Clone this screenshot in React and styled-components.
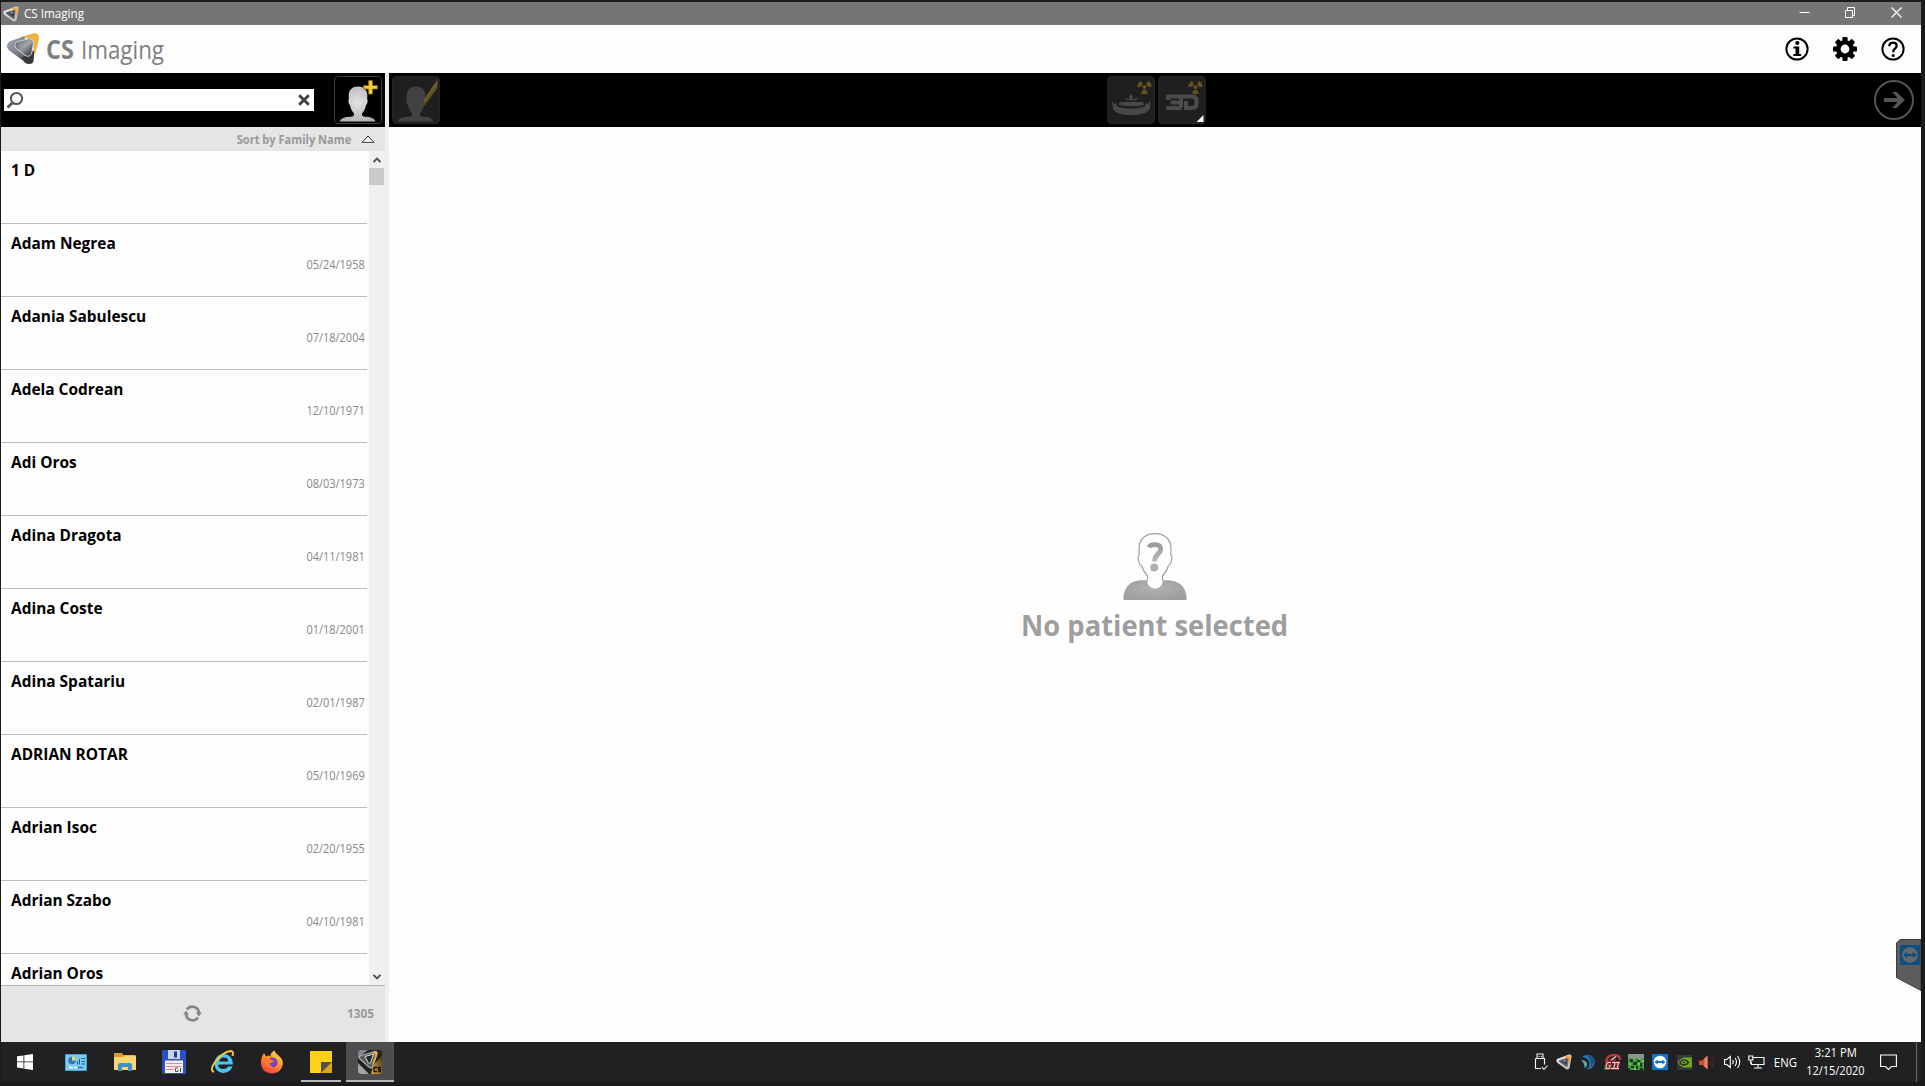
import React from "react";
import styled, { createGlobalStyle } from "styled-components";

const GlobalStyle = createGlobalStyle`
  * { box-sizing: border-box; }
  body { margin: 0; background: #1c1a1b; overflow: hidden; }
  svg { display: block; flex: none; }
`;

const Screen = styled.div`
  position: relative;
  display: flex;
  flex-direction: column;
  width: 1925px;
  height: 1086px;
  padding: 2px 4px 4px 1px;
  background: #1c1a1b;
  font-family: "Open Sans", "Noto Sans", sans-serif;
  overflow: hidden;
`;

const Fit = styled.span`
  display: inline-block;
  white-space: nowrap;
  transform: scaleX(${(p) => p.$x || 1});
  transform-origin: ${(p) => p.$origin || "left"} center;
`;

const TitleBar = styled.header`
  display: flex;
  align-items: center;
  height: 23px;
  padding-left: 2px;
  background: #757575;
  color: #fff;
  font-size: 12px;
`;
const TitleText = styled.div`
  flex: 1;
  margin-left: 5px;
  height: 23px;
  line-height: 23px;
`;
const WindowButtons = styled.div`
  display: flex;
  gap: 29px;
  padding: 0 16px 2px 0;
`;

const Brand = styled.div`
  display: flex;
  align-items: center;
  height: 48px;
  padding: 0 16px 0 5px;
  background: #fefdfe;
`;
const BrandName = styled.div`
  flex: 1;
  display: flex;
  gap: 7px;
  margin-left: 6px;
  color: #7c8081;
  font-size: 26px;
  line-height: 46px;
  b { font-weight: 700; width: 28px; }
`;
const BrandActions = styled.div`
  display: flex;
  gap: 24px;
  padding-bottom: 0;
`;

const Body = styled.div`
  display: flex;
  height: 969px;
`;
const Sidebar = styled.aside`
  display: flex;
  flex-direction: column;
  width: 384px;
`;
const Gutter = styled.div`
  width: 4px;
  background: #efeef0;
`;
const SearchBar = styled.div`
  display: flex;
  align-items: center;
  justify-content: space-between;
  height: 54px;
  padding: 0 3px;
  background: #000;
`;
const SearchField = styled.div`
  display: flex;
  align-items: center;
  justify-content: space-between;
  width: 310px;
  height: 22px;
  padding: 0 4px 0 2px;
  background: #fff;
`;
const ToolButton = styled.div`
  width: 48px;
  height: 48px;
  border: 1px solid ${(p) => (p.$dim ? "#242424" : "#3c3c3c")};
  border-radius: 4px;
  background: ${(p) => (p.$dim ? "#1f1f1f" : "#000")};
  overflow: hidden;
`;
const SortBar = styled.div`
  display: flex;
  align-items: center;
  justify-content: flex-end;
  gap: 10px;
  height: 24px;
  padding-right: 10px;
  background: #e5e5e5;
  color: #999;
  font-size: 12.3px;
  font-weight: 700;
`;
const ListArea = styled.div`
  display: flex;
  height: 834px;
  background: #fefdfe;
`;
const Rows = styled.div`
  width: 366px;
  margin-right: 2px;
  overflow: hidden;
`;
const Row = styled.div`
  display: flex;
  flex-direction: column;
  height: 73px;
  padding: 10px 2px 0 10px;
  border-bottom: 1px solid #bcbbc0;
`;
const Name = styled.div`
  height: 20px;
  color: #000;
  font-size: 15.4px;
  font-weight: 700;
  line-height: 20px;
`;
const Birth = styled.div`
  height: 20px;
  margin-top: 1px;
  color: #888;
  font-size: 12px;
  line-height: 20px;
  text-align: right;
`;
const ScrollTrack = styled.div`
  display: flex;
  flex-direction: column;
  align-items: center;
  justify-content: space-between;
  width: 16px;
  padding: 6px 1px 5px 0;
  background: #f0eff1;
`;
const ScrollTop = styled.div`
  display: flex;
  flex-direction: column;
  align-items: center;
  gap: 5px;
`;
const Thumb = styled.div`
  width: 15px;
  height: 17px;
  background: #cacacb;
`;
const ListFooter = styled.footer`
  display: grid;
  grid-template-columns: 1fr auto 1fr;
  align-items: center;
  height: 57px;
  border-top: 1px solid #b4b4b8;
  padding: 0 11px 2px 0;
  background: #e5e5e5;
  color: #999;
  font-size: 12.4px;
  font-weight: 700;
  text-align: right;
`;
const RefreshSlot = styled.div`
  grid-column: 2;
  padding-left: 10px;
`;

const Main = styled.main`
  display: flex;
  flex-direction: column;
  flex: 1;
`;
const Toolbar = styled.div`
  display: grid;
  grid-template-columns: 1fr auto 1fr;
  align-items: center;
  height: 54px;
  padding: 0 7px 0 3px;
  background: #000;
`;
const ToolGroup = styled.div`
  display: flex;
  gap: 3px;
  margin-left: 7px;
`;
const RightSlot = styled.div`
  justify-self: end;
`;
const Empty = styled.div`
  display: flex;
  flex-direction: column;
  align-items: center;
  flex: 1;
  padding-top: 406px;
  background: #fefdfe;
`;
const EmptyText = styled.div`
  margin-top: 3px;
  color: #9e9e9e;
  font-size: 29px;
  font-weight: 700;
  line-height: 42px;
`;

const Taskbar = styled.nav`
  display: flex;
  height: 40px;
  background: #212123;
  color: #fff;
`;
const TaskSlot = styled.div`
  display: flex;
  align-items: center;
  justify-content: center;
  width: ${(p) => (p.$start ? 50 : 49)}px;
  padding-right: ${(p) => (p.$start ? 2 : 0)}px;
`;
const TaskButton = styled.div`
  display: flex;
  align-items: center;
  justify-content: center;
  width: ${(p) => (p.$active ? 48 : 40)}px;
  height: 40px;
  padding-top: 2px;
  margin-left: ${(p) => (p.$active ? 1 : 0)}px;
  background: ${(p) => (p.$active ? "#4d4c4e" : "transparent")};
  border-bottom: 2px solid ${(p) => (p.$open || p.$active ? "#b9b9ba" : "transparent")};
`;
const Spacer = styled.div`
  flex: 1;
`;
const TraySlot = styled.div`
  display: flex;
  align-items: center;
  justify-content: center;
  width: ${(p) => p.$w || 24}px;
  font-size: 12.2px;
`;
const Clock = styled.div`
  display: flex;
  flex-direction: column;
  align-items: center;
  width: 65px;
  padding-top: 2px;
  font-size: 12.2px;
  line-height: 18px;
`;
const ShowDesktop = styled.div`
  width: 5px;
  margin-left: 8px;
  border-left: 1px solid #68686a;
`;
const RemoteTab = styled.div`
  position: absolute;
  right: 4px;
  top: 939px;
`;

const Logo = ({ w, h, id }) => (
  <svg width={w} height={h} viewBox="0 0 33 32">
    <defs>
      <linearGradient id={id + "b"} x1="0" y1="0" x2="1" y2="1">
        <stop offset="0" stopColor="#a3a8b2" />
        <stop offset="0.5" stopColor="#7d828c" />
        <stop offset="1" stopColor="#3a3b3e" />
      </linearGradient>
      <linearGradient id={id + "g"} x1="0" y1="0" x2="1" y2="1">
        <stop offset="0" stopColor="#4d5359" />
        <stop offset="0.5" stopColor="#979ca1" />
        <stop offset="1" stopColor="#25282a" />
      </linearGradient>
    </defs>
    <path d="M3 8.500 L18 3 L22 31 Q19.500 31 17 28 L2 17 Q-1.500 11.500 3 8.500Z" fill={`url(#${id}b)`} />
    <path d="M15 25 L28 17 L27 28.500 Q24.500 33 18.500 29.500Z" fill="#353638" />
    <path d="M16 3.500 L28 0 Q33 0 32.500 6 L28.500 22 L25.500 7.500Z" fill="#efb045" />
    <path d="M10 9 L23 5.500 Q27 6 27 10 L25 21 Q22 25 18 22 L9 15 Q7 11 10 9Z" fill={`url(#${id}g)`} stroke="#d4d6d9" strokeWidth="1" />
    <path d="M11 10 L22 7 Q25 7 25 11 L17 15 L11 14Z" fill="#fff" opacity=".12" />
  </svg>
);

const AppMark = ({ size = 16, id }) => (
  <svg width={size} height={size} viewBox="0 0 16 16">
    <defs>
      <linearGradient id={id} x1="0" y1="0" x2="1" y2="1">
        <stop offset="0" stopColor="#f4f4f5" />
        <stop offset="1" stopColor="#b9babc" />
      </linearGradient>
    </defs>
    <path d="M1 5 L13 .6 Q16 0 15.500 3 L13.500 14 Q12 16.500 10 15 L1.300 8.800 Q-.3 6.500 1 5Z" fill={`url(#${id})`} />
    <path d="M8.500 2.500 L13.500 1.200 Q15.300 1.300 14.800 4 L13.500 11 L12 4.500Z" fill="#f3a93a" />
    <path d="M3 6.200 L11.500 3.700 Q12.500 4 12.500 5 L11.800 12 Q11 13.500 9.500 12.500 L3.200 8Q2.300 7 3 6.200Z" fill="#6b6c6f" />
    <path d="M5.500 6.300 L11 5 L10.500 11 L5.500 7.700Z" fill="#38393b" />
    <path d="M6.300 6.500 L10.500 5.500 L9 8.500Z" fill="#8d8f92" />
  </svg>
);

const headPath =
  "M24 10.5 C29.5 10.5 33 13.5 33.3 19 L33.2 23 Q34.5 25 33 28 L32.2 28.8 C31.2 33 30 35.5 28 37.5 L28 39.3 Q28.5 40.5 31 40.8 Q40 41 41.5 45.5 L5.5 45.5 Q7 41 17 40.8 Q19.5 40.5 20 39.3 L20 37.5 C18 35.5 16.8 33 15.8 28.8 L15 28 Q13.5 25 14.8 23 L14.7 19 C15 13.5 18.5 10.5 24 10.5Z";

const AddPatient = () => (
  <svg width="46" height="46" viewBox="1 1 46 46">
    <defs>
      <radialGradient id="bust" cx=".5" cy=".45" r=".6">
        <stop offset="0" stopColor="#e2e2e2" />
        <stop offset="1" stopColor="#b4b4b4" />
      </radialGradient>
    </defs>
    <path d={headPath} fill="url(#bust)" />
    <path d="M34.500 4.500h4v5h5v3.600h-5v5h-4v-5h-5V9.500h5z" fill="#f3cd36" stroke="#7d5b12" strokeWidth=".8" />
  </svg>
);
const EditPatient = () => (
  <svg width="46" height="46" viewBox="1 1 46 46">
    <path d={headPath} fill="#424244" />
    <path d="M45.500 3 L45.500 12 L33 29 L29.500 30.500 L30 26Z" fill="#5d5023" />
    <path d="M45 7 L32 26" stroke="#6f5f28" strokeWidth="1.500" />
    <path d="M30 25l3.500 3-4 2z" fill="#4a401f" />
  </svg>
);

const Trefoil = () => (
  <g transform="translate(37.500 11)" fill="#64521f">
    <circle r="1.900" />
    {[0, 120, 240].map((a) => (
      <path key={a} transform={`rotate(${a})`} d="M-1.300 2.600 L-3.500 6.300 Q0 8.200 3.500 6.300 L1.300 2.600 Q0 3.400 -1.300 2.600Z" />
    ))}
  </g>
);
const Panoramic = () => (
  <svg width="46" height="46" viewBox="1 1 46 46">
    <Trefoil />
    <g fill="#48484a">
      <path d="M5 25 L7.500 28.500 L9 26.500 L10 30.500 Q24 35 38 30.500 L39 26.500 L40.500 28.500 L43.500 25 L43 33 Q39 39 24 39 Q9 39 6 33Z" />
      <path d="M12 26.500 Q18 25.500 23 26 L36 26 L37 29 Q24 31.500 12 29Z" />
      <path d="M18 21.500 L22 23.500 L23 19.500 L24 18 L25 19.500 L26 23.500 L31 21.500 L29.500 24.300 L20 24.300Z" />
    </g>
  </svg>
);
const ThreeD = () => (
  <svg width="46" height="46" viewBox="1 1 46 46">
    <Trefoil />
    <g fill="none" stroke="#4b4b4d" strokeWidth="4">
      <path d="M8.500 20.500 H23.500 M12.500 26.500 H23 M8.500 32 H23.500" />
      <path d="M10 19 V24 M10 30 V33.500 M23 21 V31.500" />
      <path d="M22 20.500 H34 Q38.500 20.500 38.500 24 V28 Q38.500 32 34 32 H28 V25" />
    </g>
    <path d="M45.500 39 V46 H38.500Z" fill="#fff" />
  </svg>
);

const InfoIcon = () => (
  <svg width="24" height="24" viewBox="0 0 24 24">
    <circle cx="12" cy="12" r="10.600" fill="none" stroke="#000" strokeWidth="2" />
    <circle cx="12.300" cy="6" r="2.100" />
    <path d="M8.500 9.500h5.700v7.600h2v2H8.300v-2h2.200v-5.600h-2z" />
  </svg>
);
const GearIcon = () => (
  <svg width="24" height="24" viewBox="-12 -12 24 24">
    {[0, 45, 90, 135].map((a) => (
      <rect key={a} x="-2.600" y="-12" width="5.200" height="24" rx="1.200" transform={`rotate(${a})`} />
    ))}
    <circle r="9" />
    <circle r="4.400" fill="#fefdfe" />
  </svg>
);
const HelpIcon = () => (
  <svg width="24" height="24" viewBox="0 0 24 24" fill="none" stroke="#000">
    <circle cx="12" cy="12" r="10.600" strokeWidth="2" />
    <path d="M8.300 9.300 Q8.300 5.600 12 5.600 Q15.700 5.600 15.700 8.800 Q15.700 10.600 13.800 11.700 Q12.200 12.700 12.200 15.300" strokeWidth="2.300" />
    <circle cx="12.200" cy="18.500" r="1.500" fill="#000" stroke="none" />
  </svg>
);
const Arrow = () => (
  <svg width="40" height="40" viewBox="0 0 40 40" fill="none" stroke="#555557">
    <circle cx="20" cy="20" r="19" strokeWidth="2" />
    <path d="M10 20 H27" strokeWidth="4" />
    <path d="M18 12 H22.500 L31 20 L22.500 28 H18 L25.500 20Z" fill="#555557" stroke="none" />
  </svg>
);
const Chevron = ({ down }) => (
  <svg width="8" height="6" viewBox="0 0 8 6">
    <path d={down ? "M.5 .8 L4 4.300 L7.500 .8" : "M.5 5.200 L4 1.700 L7.500 5.200"} fill="none" stroke="#4f4f51" strokeWidth="1.900" />
  </svg>
);

const UnknownPatient = () => (
  <svg width="64" height="68" viewBox="0 0 64 68">
    <defs>
      <linearGradient id="shade" x1="0" y1="0" x2="0" y2="1">
        <stop offset="0" stopColor="#9b9b9b" />
        <stop offset="1" stopColor="#b9b9b9" />
      </linearGradient>
      <radialGradient id="torso" cx=".5" cy=".4" r=".6">
        <stop offset="0" stopColor="#b3b3b3" />
        <stop offset="1" stopColor="#9e9e9e" />
      </radialGradient>
    </defs>
    <path d="M.5 67 V63 Q3 48 18 47.300 H45 Q61 48 63.500 63 V67Z" fill="url(#torso)" />
    <path
      d="M32 .7 C42 .7 48 6.500 48 16 L47.700 21.500 Q50 23 48 29 Q47.500 32 45.500 32.500 Q44 38 39.500 43 L39.500 47.500 Q40 51.500 36.500 54 Q32 57 27.500 54 Q24 51.500 24.500 47.500 L24.500 43 Q20 38 18.500 32.500 Q16.500 32 16 29 Q14 23 16.300 21.500 L16 16 C16 6.500 22 .7 32 .7Z"
      fill="#fefdfe"
    />
    <path
      d="M24.500 47.500 L24.500 43 Q20 38 18.500 32.500 Q16.500 32 16 29 Q14 23 16.300 21.500 L16 16 C16 6.500 22 .7 32 .7 C42 .7 48 6.500 48 16 L47.700 21.500 Q50 23 48 29 Q47.500 32 45.500 32.500 Q44 38 39.500 43 L39.500 47.500"
      fill="none" stroke="#a0a0a0" strokeWidth="1.200"
    />
    <path d="M26 14.300 Q27 11.600 32.500 11.600 Q37.700 12 37.700 16 Q37.700 18.500 34.500 21.500 Q31.600 24 31.500 28.500" fill="none" stroke="url(#shade)" strokeWidth="4.800" />
    <circle cx="31.200" cy="34.500" r="4" fill="#b0b0b0" />
  </svg>
);

const Refresh = () => (
  <svg width="19" height="17" viewBox="0 0 19 17">
    <path d="M4 4.500 A6.600 6.600 0 0 1 16 8 M15 12.500 A6.600 6.600 0 0 1 3 9" fill="none" stroke="#868686" strokeWidth="2.700" />
    <path d="M12.800 7.500h6l-2.800 4z M.2 9.500h6l-3.200-4z" fill="#868686" />
  </svg>
);

const TeamViewer = ({ size, bg = "#1474c9", fg = "#fff" }) => (
  <svg width={size} height={size} viewBox="0 0 16 16">
    <rect width="16" height="16" fill={bg} />
    <circle cx="8" cy="8" r="6.300" fill={fg} />
    <path d="M2.400 8 L5.700 5.400 V7.100 H10.300 V5.400 L13.600 8 L10.300 10.600 V8.900 H5.700 V10.600Z" fill={bg} />
  </svg>
);

const WindowsIcon = () => (
  <svg width="16" height="16" viewBox="0 0 16 16" fill="#fff">
    <path d="M0 2.300 6.500 1.400V7.500H0z M7.300 1.300 16 0V7.500H7.300z M0 8.300H6.500V14.500L0 13.600z M7.300 8.300H16V16L7.300 14.700z" />
  </svg>
);
const ControlPanel = () => (
  <svg width="22" height="17" viewBox="0 0 22 17">
    <rect width="22" height="17" rx="1" fill="#48a3d2" />
    <rect x="1" y="1" width="20" height="15" fill="#7ccbf0" />
    <circle cx="7" cy="6.500" r="3.700" fill="#257eb0" />
    <path d="M7 6.500V2.600A3.800 3.800 0 0 1 10.800 6.500z" fill="#f5d66a" />
    <path d="M12.500 10.500V7M14.500 10.500V5M16.500 4.500h3.500M16.500 7.500h3.500M16.500 10h3.500" stroke="#145f8e" fill="none" />
    <path d="M4 13.500h4M9 13.500h3" stroke="#f8f8f8" strokeWidth="1.300" />
    <path d="M13 13.500h5" stroke="#1e6fa0" strokeWidth="1.300" />
  </svg>
);
const Folder = () => (
  <svg width="22" height="18" viewBox="0 0 22 18">
    <path d="M0 0h8l1.500 2H21v5H0z" fill="#d99a2a" />
    <path d="M0 4h9l1-1.500h12V17H0z" fill="#f8d573" />
    <path d="M4 18v-6q0-2 2-2h10q2 0 2 2v6h-4v-4H8v4z" fill="#3c91c8" />
  </svg>
);
const Floppy = () => (
  <svg width="24" height="24" viewBox="0 0 24 24">
    <path d="M0 1l1-1h22l1 1v22l-1 1H1l-1-1z" fill="#2b50c4" />
    <rect x="6" width="12" height="9" fill="#c7d3dd" />
    <rect x="12" y="1.500" width="3" height="6" fill="#1b3d9f" />
    <path d="M3 10.500h18V23H3z" fill="#f7eeee" />
    <path d="M4 13.500h16M4 16.500h16M4 19.500h8" stroke="#d98d8d" />
    <path d="M16 18h-2.500v3.500h2.500v-1.500M18.500 18v4" stroke="#444" strokeWidth=".9" fill="none" />
  </svg>
);
const Explorer = () => (
  <svg width="24" height="24" viewBox="0 0 24 24">
    <path d="M7 15.500 Q8 19 12.500 19 Q15.500 19 17 16.500 L21.500 16.500 Q19 23 12 23 Q3.500 22 3.500 13.500 Q4 4.500 12.500 4 Q21.500 4 22 14.500 H8M8.300 11.500 H17.300 Q17 7.700 12.800 7.500 Q9 7.700 8.300 11.500Z" fill="#4cc3f1" fillRule="evenodd" />
    <path d="M3 22 Q-2 20 4.500 11.500 Q12 2 19.500 1 Q23 1 21.500 6" fill="none" stroke="#f2c637" strokeWidth="2" />
  </svg>
);
const Firefox = () => (
  <svg width="24" height="24" viewBox="0 0 24 24">
    <defs>
      <linearGradient id="fire" x1=".8" y1="0" x2=".2" y2="1">
        <stop offset="0" stopColor="#ffe14a" />
        <stop offset=".5" stopColor="#ff8b28" />
        <stop offset="1" stopColor="#f3304f" />
      </linearGradient>
    </defs>
    <path d="M4 3 L6 6.500 L9 5.500 L10.500 7 Q10 2.500 14.500 .5 Q15 3.500 18 5 L19 6 Q23 9 22.800 14 Q21.500 23 12 23.500 Q2 23 1 14 Q.5 8 4 3Z" fill="url(#fire)" />
    <circle cx="12.500" cy="12.500" r="5" fill="#7442cf" />
    <path d="M4 9 Q8 7.500 11 9.500 L14.500 11 Q13 13.500 9.500 13 Q10 17 14 17 Q9 20 5.500 15Z" fill="#ff7a2b" />
  </svg>
);
const Sticky = () => (
  <svg width="22" height="22" viewBox="0 0 22 22">
    <path d="M0 0h22v11L11 22H0z" fill="#fcd116" />
    <path d="M11 11h11L11 22z" fill="#51504d" />
    <path d="M22 11v11H11z" fill="#dca613" />
  </svg>
);
const CsTask = () => (
  <svg width="24" height="24" viewBox="0 0 24 24">
    <defs>
      <linearGradient id="gold" x1="1" y1="0" x2="0" y2="1">
        <stop offset="0" stopColor="#45371d" />
        <stop offset=".5" stopColor="#9b7227" />
        <stop offset="1" stopColor="#e0a63a" />
      </linearGradient>
    </defs>
    <rect width="24" height="24" rx="3" fill="#222120" />
    <path d="M0 3 Q0 0 3 0 H10 L0 8Z" fill="#85878a" />
    <path d="M0 13 L11 24 H3 Q0 24 0 21Z" fill="#a1a3a6" />
    <path d="M15 15 L24 6 V22 Q24 24 22 24 H13Z" fill="url(#gold)" />
    <path d="M2 6 L17 1.500 Q19.500 1.500 19 4 L14.500 17 Q13 18.500 11 17 L2 9 Q.5 7 2 6Z" fill="#5b5e61" stroke="#a5a7aa" strokeWidth="1.300" />
    <path d="M7 6.500 L15.500 4 L12.500 13 Q11.500 14 10.500 13Z" fill="#252628" stroke="#dcdddf" />
    <path d="M14 2.700 L17 1.500 Q20 1.500 19.200 4 L15.500 15 L14.500 14 L17.300 4.500Z" fill="#f4a92e" />
    <path d="M19 17.500h-3v4h3M23 17.500h-2.500v2h2v2H20" fill="none" stroke="#17130c" strokeWidth="1.300" />
  </svg>
);

const UsbIcon = () => (
  <svg width="15" height="18" viewBox="0 0 15 18" fill="none" stroke="#f4f4f4" strokeWidth="1.100">
    <path d="M4 5.500V1h6v4.500M2.500 5.500h9v6M2.500 5.500V15.500h5.500M9 14l2 2.500 3.500-4" />
    <path d="M5.500 3.500h1M8 3.500h1" />
  </svg>
);
const Swirl = () => (
  <svg width="16" height="16" viewBox="0 0 16 16">
    <path d="M2 3 Q6 0 10 1 Q15 3.500 15 8.500 Q14 15 6 15.500 Q11 12 9 7.500 Q7 3.500 2 3Z" fill="#2377ab" />
    <path d="M6 1 Q14 1 14 9 L11 13 Q12.500 5 6 1Z" fill="#1d4a86" />
    <path d="M1 6.500 Q5 5.500 7 9.500 Q7 13.500 4.500 14 Q5 9 1 6.500Z" fill="#44b9b2" />
  </svg>
);
const Gauge = () => (
  <svg width="17" height="16" viewBox="0 0 17 16" fill="none">
    <path d="M2 8 Q3 1 10 1 Q16 1 16 6" stroke="#b03a3d" strokeWidth="2.500" />
    <path d="M4 7 Q6 4 12 4.500 V7Z" fill="#8e2529" />
    <path d="M7 6 L12 2.500" stroke="#ddd" strokeWidth="1.200" />
    <path d="M7 8.500H3L1.700 14.500H5.500L6.200 11.500H4.500M8 8.500h8M11 8.500l-1.300 6M14.500 8.500l-1.300 6M7 14.500h8" stroke="#a8282f" strokeWidth="3" />
    <path d="M7 8.500H3L1.700 14.500H5.500L6.200 11.500H4.500M8 8.500h8M11 8.500l-1.300 6M14.500 8.500l-1.300 6M7 14.500h8" stroke="#e6d5d5" strokeWidth="1" />
  </svg>
);
const Creeper = () => (
  <svg width="16" height="16" viewBox="0 0 16 16">
    <rect width="16" height="16" fill="#47963d" />
    <path d="M0 0h16v4h-3v2h-3V4H7v2H3V4H0z" fill="#8a988b" />
    <path d="M2 5h3v3H2zM9 6h3v2H9zM5 8h4v3H5zM3 12h3v2H3zM8 12h2v3H8zM12 9h2v4h-2zM0 14h2v2H0zM12 14h3v2h-3z" fill="#193c1b" />
    <path d="M1 9h2v2H1zM10 9h2v2h-2zM6 14h2v2H6zM14 6h2v2h-2z" fill="#7acc68" />
  </svg>
);
const Nvidia = () => (
  <svg width="15" height="15" viewBox="0 0 15 15">
    <rect width="15" height="15" fill="#343a3c" />
    <path d="M6 2.500h9v10H6z" fill="#71a70d" />
    <path d="M1 7.500 Q4 3.500 7.500 3.500 Q11.500 4 13 7.500 Q10.500 11.500 7 11.500 Q3 11 1 7.500Z" fill="#26321c" stroke="#8bc625" strokeWidth="1" />
    <path d="M4 7.500 Q7 4.500 10 7.500 Q7.500 10 4 7.500Z" fill="none" stroke="#8bc625" />
  </svg>
);
const RedSpeaker = () => (
  <svg width="18" height="15" viewBox="1 0 18 15">
    <path d="M1 5.500h3L9.500 1v13L4 10H1z" fill="#c9502f" />
    <path d="M6.500 3.500l3-3v14l-3-3z" fill="#e88762" />
    <path d="M12 5q2 2.500 0 5M14 2q3 5.500 0 11" stroke="#5a241c" fill="none" />
  </svg>
);
const Volume = () => (
  <svg width="17" height="14" viewBox="0 0 17 14" fill="none" stroke="#fff" strokeWidth="1.100">
    <path d="M.6 4.500h2.200L6.300 1.500v11L2.800 9.500H.6zM8.500 5q1.500 2 0 4M11 3q3 4 0 8M13.500 1q4.500 6 0 12" />
  </svg>
);
const Network = () => (
  <svg width="17" height="14" viewBox="0 0 17 14" fill="none" stroke="#fff" strokeWidth="1.100">
    <path d="M5.500 2.500H16v7H3.500V7M.8 1h4v4h-4zM2.800 5v4M10 9.500v3.500M6 13h8" />
  </svg>
);
const Notice = () => (
  <svg width="17" height="17" viewBox="0 0 17 17" fill="none" stroke="#fff" strokeWidth="1.100">
    <path d="M.6 1h15.800v11.500h-5L8.500 15.500 5.500 12.500H.6z" />
  </svg>
);

const patients = [
  ["1 D", ""],
  ["Adam Negrea", "05/24/1958"],
  ["Adania Sabulescu", "07/18/2004"],
  ["Adela Codrean", "12/10/1971"],
  ["Adi Oros", "08/03/1973"],
  ["Adina Dragota", "04/11/1981"],
  ["Adina Coste", "01/18/2001"],
  ["Adina Spatariu", "02/01/1987"],
  ["ADRIAN ROTAR", "05/10/1969"],
  ["Adrian Isoc", "02/20/1955"],
  ["Adrian Szabo", "04/10/1981"],
  ["Adrian Oros", ""],
];

const pinned = [
  { icon: <ControlPanel /> },
  { icon: <Folder /> },
  { icon: <Floppy /> },
  { icon: <Explorer /> },
  { icon: <Firefox /> },
  { icon: <Sticky />, open: true },
  { icon: <CsTask />, active: true },
];

const tray = [
  <UsbIcon />, <AppMark id="tray" />, <Swirl />, <Gauge />, <Creeper />,
  <TeamViewer size={16} />, <Nvidia />, <RedSpeaker />, <Volume />, <Network />,
];

export default function App() {
  return (
    <>
      <GlobalStyle />
      <Screen>
        <TitleBar>
          <AppMark id="title" />
          <TitleText><Fit $x={0.97}>CS Imaging</Fit></TitleText>
          <WindowButtons>
            <svg width="17" height="11" viewBox="0 0 17 11"><path d="M3.500 5.500h10" stroke="#fff" /></svg>
            <svg width="17" height="11" viewBox="0 0 17 11" fill="none" stroke="#fff">
              <path d="M3.500 3.500h7v7h-7zM5.500 3V.5h7v8H11" />
            </svg>
            <svg width="17" height="11" viewBox="0 0 17 11"><path d="M3.500 .5l10 10M13.500 .5l-10 10" stroke="#fff" strokeWidth="1.200" /></svg>
          </WindowButtons>
        </TitleBar>
        <Brand>
          <Logo w={34} h={32} id="brand" />
          <BrandName>
            <b><Fit $x={0.9}>CS</Fit></b>
            <Fit $x={0.86}>Imaging</Fit>
          </BrandName>
          <BrandActions><InfoIcon /><GearIcon /><HelpIcon /></BrandActions>
        </Brand>
        <Body>
          <Sidebar>
            <SearchBar>
              <SearchField>
                <svg width="18" height="18" viewBox="0 0 18 18" fill="none" stroke="#555">
                  <circle cx="10.500" cy="7.500" r="5.600" strokeWidth="2" />
                  <path d="M6.300 12 L1.500 16.500" strokeWidth="2.800" />
                </svg>
                <svg width="12" height="12" viewBox="0 0 12 12"><path d="M1.200 1.200l9.600 9.600M10.800 1.200l-9.600 9.600" stroke="#3f3f3f" strokeWidth="2.900" /></svg>
              </SearchField>
              <ToolButton><AddPatient /></ToolButton>
            </SearchBar>
            <SortBar>
              <Fit $origin="right" $x={0.9}>Sort by Family Name</Fit>
              <svg width="14" height="8" viewBox="0 0 14 8"><path d="M1 7.300L7 1l6 6.300z" fill="#fff" stroke="#333" strokeWidth="1" /></svg>
            </SortBar>
            <ListArea>
              <Rows>
                {patients.map(([name, birth]) => (
                  <Row key={name}>
                    <Name><Fit $x={1.003}>{name}</Fit></Name>
                    <Birth><Fit $x={0.915} $origin="right">{birth}</Fit></Birth>
                  </Row>
                ))}
              </Rows>
              <ScrollTrack>
                <ScrollTop><Chevron /><Thumb /></ScrollTop>
                <Chevron down />
              </ScrollTrack>
            </ListArea>
            <ListFooter>
              <RefreshSlot><Refresh /></RefreshSlot>
              <Fit $origin="right" $x={0.95}>1305</Fit>
            </ListFooter>
          </Sidebar>
          <Gutter />
          <Main>
            <Toolbar>
              <ToolButton $dim><EditPatient /></ToolButton>
              <ToolGroup>
                <ToolButton $dim><Panoramic /></ToolButton>
                <ToolButton $dim><ThreeD /></ToolButton>
              </ToolGroup>
              <RightSlot><Arrow /></RightSlot>
            </Toolbar>
            <Empty>
              <UnknownPatient />
              <EmptyText><Fit $origin="center" $x={0.943}>No patient selected</Fit></EmptyText>
            </Empty>
          </Main>
        </Body>
        <Taskbar>
          <TaskSlot $start><WindowsIcon /></TaskSlot>
          {pinned.map((t, i) => (
            <TaskSlot key={i}>
              <TaskButton $open={t.open} $active={t.active}>{t.icon}</TaskButton>
            </TaskSlot>
          ))}
          <Spacer />
          {tray.map((icon, i) => <TraySlot key={i}>{icon}</TraySlot>)}
          <TraySlot $w={35}><Fit $origin="center" $x={0.93}>ENG</Fit></TraySlot>
          <Clock>
            <Fit $origin="center" $x={0.92}>3:21 PM</Fit>
            <Fit $origin="center" $x={0.9}>12/15/2020</Fit>
          </Clock>
          <TraySlot $w={40}><Notice /></TraySlot>
          <ShowDesktop />
        </Taskbar>
        <RemoteTab>
          <svg width="25" height="52" viewBox="0 0 25 52">
            <path d="M.5 4 L4 .5 H25 V51.500 L.5 38.500Z" fill="#5d5d5f" stroke="#3c3c3e" />
            <svg x="4" y="6" width="20" height="20">
              <TeamViewer size={20} bg="#0d4f80" fg="#66696c" />
            </svg>
          </svg>
        </RemoteTab>
      </Screen>
    </>
  );
}
